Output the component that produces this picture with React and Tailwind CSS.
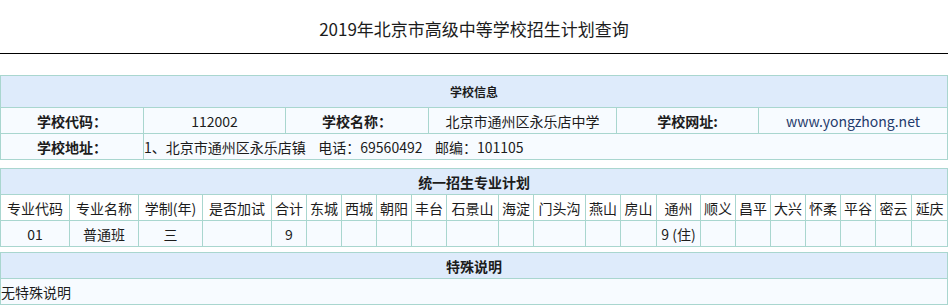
import React from 'react';

const districts = ['东城', '西城', '朝阳', '丰台', '石景山', '海淀', '门头沟', '燕山', '房山', '通州', '顺义', '昌平', '大兴', '怀柔', '平谷', '密云', '延庆'];
const planCols = [69, 69, 64, 69, 35, 35, 35, 35, 35, 52, 35, 52, 35, 36, 44, 35, 35, 35, 35, 35, 36, 36];
const planRow = ['01', '普通班', '三', '', '9', '', '', '', '', '', '', '', '', '', '9 (住)', '', '', '', '', '', '', ''];

const cell = 'border border-[#a9d6cf] p-0 text-center font-normal';
const label = 'border border-[#a9d6cf] p-0 text-center font-bold';
const head = 'border border-[#a9d6cf] bg-[#deebfb] p-0 text-center font-bold';

function App() {
  return (
    <div className="w-[948px] bg-white text-[14px] text-[#1c1c1c]" style={{ fontFamily: '"Microsoft YaHei", "Noto Sans CJK SC", sans-serif' }}>
      <div className="h-[54px] border-b border-black pt-[17px] text-center text-[17px] leading-[24px]">
        2019年北京市高级中等学校招生计划查询
      </div>

      <table className="mt-[21px] w-[948px] table-fixed border-collapse leading-[20px]">
        <colgroup>
          {[143, 142, 143, 188, 142, 189].map((w, i) => <col key={i} style={{ width: w }} />)}
        </colgroup>
        <tbody>
          <tr className="h-[32px]">
            <th colSpan={6} className={`${head} text-[12px]`}>学校信息</th>
          </tr>
          <tr className="h-[26px] bg-[#f7fbff]">
            <th className={label}>学校代码：</th>
            <td className={cell}>112002</td>
            <th className={label}>学校名称：</th>
            <td className={cell}>北京市通州区永乐店中学</td>
            <th className={label}>学校网址:</th>
            <td className={`${cell} text-[#1f3a6b]`}>www.yongzhong.net</td>
          </tr>
          <tr className="h-[26px] bg-[#f7fbff]">
            <th className={label}>学校地址：</th>
            <td colSpan={5} className={`${cell} text-left`}>1、北京市通州区永乐店镇&nbsp;&nbsp;&nbsp; 电话：69560492&nbsp;&nbsp;&nbsp; 邮编：101105</td>
          </tr>
        </tbody>
      </table>

      <table className="mt-[8px] w-[948px] table-fixed border-collapse leading-[20px]">
        <colgroup>
          {planCols.map((w, i) => <col key={i} style={{ width: w }} />)}
        </colgroup>
        <tbody>
          <tr className="h-[26px]">
            <th colSpan={22} className={head}>统一招生专业计划</th>
          </tr>
          <tr className="h-[26px] bg-white">
            {['专业代码', '专业名称', '学制(年)', '是否加试', '合计', ...districts].map((t) => (
              <td key={t} className={`${cell} whitespace-nowrap`}>{t}</td>
            ))}
          </tr>
          <tr className="h-[26px] bg-[#f7fbff]">
            {planRow.map((t, i) => (
              <td key={i} className={`${cell} whitespace-nowrap`}>{t}</td>
            ))}
          </tr>
        </tbody>
      </table>

      <table className="mt-[5px] w-[948px] border-collapse leading-[20px]">
        <tbody>
          <tr className="h-[26px]">
            <th className={head}>特殊说明</th>
          </tr>
          <tr className="h-[26px] bg-[#f7fbff]">
            <td className={`${cell} text-left`}>无特殊说明</td>
          </tr>
        </tbody>
      </table>
    </div>
  );
}

export default App;
